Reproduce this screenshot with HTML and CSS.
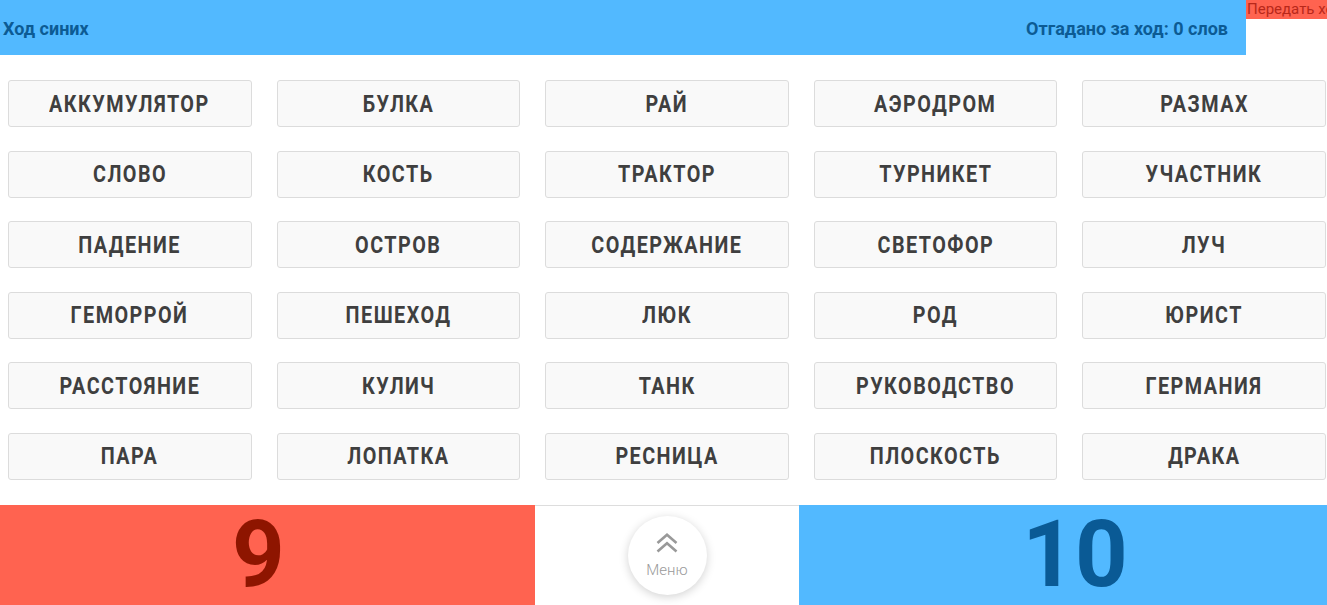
FILE: index.html
```html
<!DOCTYPE html>
<html lang="ru">
<head>
<meta charset="utf-8">
<title>Игра</title>
<link rel="stylesheet" href="styles.css">
</head>
<body>
<div class="top">
  <div class="status">
    <span class="turn">Ход синих</span>
    <span class="guessed">Отгадано за ход: 0 слов</span>
  </div>
  <div class="pass">Передать ход</div>
</div>
<main class="board">
  <div class="card"><span class="word">АККУМУЛЯТОР</span></div>
  <div class="card"><span class="word">БУЛКА</span></div>
  <div class="card"><span class="word">РАЙ</span></div>
  <div class="card"><span class="word">АЭРОДРОМ</span></div>
  <div class="card"><span class="word">РАЗМАХ</span></div>
  <div class="card"><span class="word">СЛОВО</span></div>
  <div class="card"><span class="word">КОСТЬ</span></div>
  <div class="card"><span class="word">ТРАКТОР</span></div>
  <div class="card"><span class="word">ТУРНИКЕТ</span></div>
  <div class="card"><span class="word">УЧАСТНИК</span></div>
  <div class="card"><span class="word">ПАДЕНИЕ</span></div>
  <div class="card"><span class="word">ОСТРОВ</span></div>
  <div class="card"><span class="word">СОДЕРЖАНИЕ</span></div>
  <div class="card"><span class="word">СВЕТОФОР</span></div>
  <div class="card"><span class="word">ЛУЧ</span></div>
  <div class="card"><span class="word">ГЕМОРРОЙ</span></div>
  <div class="card"><span class="word">ПЕШЕХОД</span></div>
  <div class="card"><span class="word">ЛЮК</span></div>
  <div class="card"><span class="word">РОД</span></div>
  <div class="card"><span class="word">ЮРИСТ</span></div>
  <div class="card"><span class="word">РАССТОЯНИЕ</span></div>
  <div class="card"><span class="word">КУЛИЧ</span></div>
  <div class="card"><span class="word">ТАНК</span></div>
  <div class="card"><span class="word">РУКОВОДСТВО</span></div>
  <div class="card"><span class="word">ГЕРМАНИЯ</span></div>
  <div class="card"><span class="word">ПАРА</span></div>
  <div class="card"><span class="word">ЛОПАТКА</span></div>
  <div class="card"><span class="word">РЕСНИЦА</span></div>
  <div class="card"><span class="word">ПЛОСКОСТЬ</span></div>
  <div class="card"><span class="word">ДРАКА</span></div>
</main>
<footer class="score">
  <div class="team red"><span>9</span></div>
  <div class="middle">
    <div class="menu">
      <svg class="chev" width="24" height="20" viewBox="0 0 24 20" aria-hidden="true">
        <path d="M2.5 10 L12 1.8 L21.5 10" fill="none" stroke="#999" stroke-width="2.6"/>
        <path d="M2.5 18.5 L12 10.3 L21.5 18.5" fill="none" stroke="#999" stroke-width="2.6"/>
      </svg>
      <span class="menu-label">Меню</span>
    </div>
  </div>
  <div class="team blue"><span>10</span></div>
</footer>
</body>
</html>
```
FILE: styles.css
```css
html, body {
  margin: 0;
  padding: 0;
  background: #fff;
  overflow: hidden;
  font-family: Roboto, "Noto Sans", sans-serif;
}

.top {
  display: flex;
  align-items: flex-start;
  width: 1327px;
  overflow: hidden;
  height: 55px;
}

.status {
  flex: 0 0 1246px;
  height: 55px;
  background: #52b9ff;
  display: flex;
  align-items: center;
  justify-content: space-between;
  padding: 1px 18px 0 3px;
  box-sizing: border-box;
  color: #0c5b94;
  font-weight: 700;
  font-size: 18px;
}

.pass {
  flex: 0 0 auto;
  white-space: nowrap;
  background: #ff6350;
  color: #b8281a;
  font-size: 15px;
  line-height: 19px;
  padding: 0 4px 0 1px;
}

.board {
  display: grid;
  grid-template-columns: repeat(5, 1fr);
  grid-auto-rows: 47px;
  column-gap: 25px;
  row-gap: 23.6px;
  padding: 25px 1px 0 8px;
}

.card {
  background: #f9f9f9;
  border: 1px solid #dcdcdc;
  border-radius: 3px;
  display: flex;
  align-items: center;
  justify-content: center;
  color: #3f3f3f;
}

.word {
  display: inline-block;
  white-space: nowrap;
  font-weight: 700;
  font-size: 23px;
  letter-spacing: 1.7px;
  transform: scaleX(0.86);
  margin-top: 1px;
}

.score {
  display: flex;
  height: 101px;
  margin-top: 25px;
}

.team {
  display: flex;
  align-items: center;
  justify-content: center;
  font-weight: 700;
  font-size: 92px;
  line-height: 1;
}

.red {
  flex: 0 0 535px;
  background: #ff6350;
  color: #8e1500;
  padding-right: 18px;
  box-sizing: border-box;
}

.blue {
  flex: 1 1 auto;
  background: #52b9ff;
  color: #0a5a95;
  padding-left: 24px;
}

.middle {
  flex: 0 0 264px;
  border-top: 1px solid #dddddd;
  box-sizing: border-box;
  display: flex;
  align-items: center;
  justify-content: center;
}

.menu {
  width: 79px;
  height: 79px;
  border-radius: 50%;
  background: #fff;
  box-shadow: 0 2px 10px rgba(0, 0, 0, 0.18);
  display: flex;
  flex-direction: column;
  align-items: center;
  justify-content: center;
  gap: 9px;
}

.chev {
  display: block;
}

.menu-label {
  font-size: 15px;
  line-height: 17px;
  color: #9a9a9a;
  font-weight: 300;
}
```
